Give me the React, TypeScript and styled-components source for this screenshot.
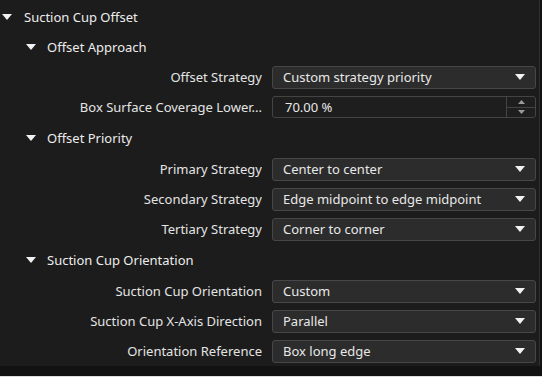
import React from 'react';
import styled, { createGlobalStyle } from 'styled-components';

const GlobalStyle = createGlobalStyle`
    html, body {
        margin: 0;
        padding: 0;
        background: #121212;
    }
    body {
        font-family: 'Noto Sans', 'Open Sans', sans-serif;
        font-size: 13px;
        color: #e2e2e2;
    }
`;

type Item =
    | { kind: 'header'; level: number; title: string; tall?: boolean }
    | { kind: 'select'; label: string; value: string }
    | { kind: 'spin'; label: string; value: string };

const items: Item[] = [
    { kind: 'header', level: 1, title: 'Suction Cup Offset' },
    { kind: 'header', level: 2, title: 'Offset Approach' },
    { kind: 'select', label: 'Offset Strategy', value: 'Custom strategy priority' },
    { kind: 'spin', label: 'Box Surface Coverage Lower...', value: '70.00 %' },
    { kind: 'header', level: 2, title: 'Offset Priority', tall: true },
    { kind: 'select', label: 'Primary Strategy', value: 'Center to center' },
    { kind: 'select', label: 'Secondary Strategy', value: 'Edge midpoint to edge midpoint' },
    { kind: 'select', label: 'Tertiary Strategy', value: 'Corner to corner' },
    { kind: 'header', level: 2, title: 'Suction Cup Orientation', tall: true },
    { kind: 'select', label: 'Suction Cup Orientation', value: 'Custom' },
    { kind: 'select', label: 'Suction Cup X-Axis Direction', value: 'Parallel' },
    { kind: 'select', label: 'Orientation Reference', value: 'Box long edge' },
];

const Caret: React.FC = () => (
    <svg width='10' height='6' viewBox='0 0 10 6'>
        <path d='M0 0 H10 L5 6 Z' fill='#f2f2f2' />
    </svg>
);

const SmallArrow: React.FC<{ up?: boolean }> = ({ up }) => (
    <svg width='7' height='4' viewBox='0 0 7 4'>
        <path d={up ? 'M0 4 H7 L3.5 0 Z' : 'M0 0 H7 L3.5 4 Z'} fill='#9a9a9a' />
    </svg>
);

const App: React.FC = () => {
    return (
        <>
            <GlobalStyle />
            <Screen>
                <Panel>
                    {items.map((item, i) => {
                        if (item.kind === 'header') {
                            return (
                                <Header key={i} $level={item.level} $tall={item.tall}>
                                    <Caret />
                                    <span>{item.title}</span>
                                </Header>
                            );
                        }
                        return (
                            <Row key={i}>
                                <Label>{item.label}</Label>
                                {item.kind === 'select' ? (
                                    <Select>
                                        <Value>{item.value}</Value>
                                        <Caret />
                                    </Select>
                                ) : (
                                    <Spin>
                                        <Value>{item.value}</Value>
                                        <SpinButtons>
                                            <SpinButton>
                                                <SmallArrow up />
                                            </SpinButton>
                                            <SpinButton>
                                                <SmallArrow />
                                            </SpinButton>
                                        </SpinButtons>
                                    </Spin>
                                )}
                            </Row>
                        );
                    })}
                </Panel>
                <Footer />
            </Screen>
        </>
    );
};

export default App;

const Screen = styled.div`
    width: 542px;
    height: 377px;
    display: flex;
    flex-direction: column;
    overflow: hidden;
    border-bottom: 1px solid #dedede;
    box-sizing: border-box;
`;

const Panel = styled.div`
    width: 540px;
    height: 366px;
    flex: none;
    box-sizing: border-box;
    padding-top: 2px;
    background: #1c1c1c;
    border-right: 1px solid #2f2f2f;
`;

const Footer = styled.div`
    flex: 1;
    background: #121212;
`;

const Header = styled.div<{ $level: number; $tall?: boolean }>`
    height: ${(p) => (p.$tall ? 32 : 30)}px;
    display: flex;
    align-items: center;
    gap: ${(p) => (p.$level === 1 ? 12 : 11)}px;
    padding-left: ${(p) => (p.$level === 1 ? 2 : 26)}px;
    padding-bottom: ${(p) => (p.$tall ? 1 : 0)}px;
    box-sizing: border-box;
    color: #ececec;
`;

const Row = styled.div`
    height: 30px;
    display: grid;
    grid-template-columns: 1fr 264px;
    align-items: center;
    column-gap: 10px;
    padding-right: 3px;
`;

const Label = styled.div`
    text-align: right;
    white-space: nowrap;
    overflow: hidden;
    color: #e4e4e4;
`;

const Select = styled.div`
    height: 23px;
    box-sizing: border-box;
    display: flex;
    align-items: center;
    justify-content: space-between;
    padding: 0 10px 0 10px;
    background: #2c2c2c;
    border: 1px solid #474747;
    border-radius: 3px;
`;

const Spin = styled.div`
    height: 22px;
    box-sizing: border-box;
    display: flex;
    align-items: center;
    padding-left: 12px;
    background: #1e1e1e;
    border: 1px solid #444444;
    border-radius: 3px;
    overflow: hidden;
`;

const Value = styled.span`
    flex: 1;
    white-space: nowrap;
    color: #e8e8e8;
`;

const SpinButtons = styled.div`
    width: 28px;
    align-self: stretch;
    display: flex;
    flex-direction: column;
    border-left: 1px solid #444444;
`;

const SpinButton = styled.div`
    flex: 1;
    display: flex;
    align-items: center;
    justify-content: center;

    & + & {
        border-top: 1px solid #444444;
    }
`;
